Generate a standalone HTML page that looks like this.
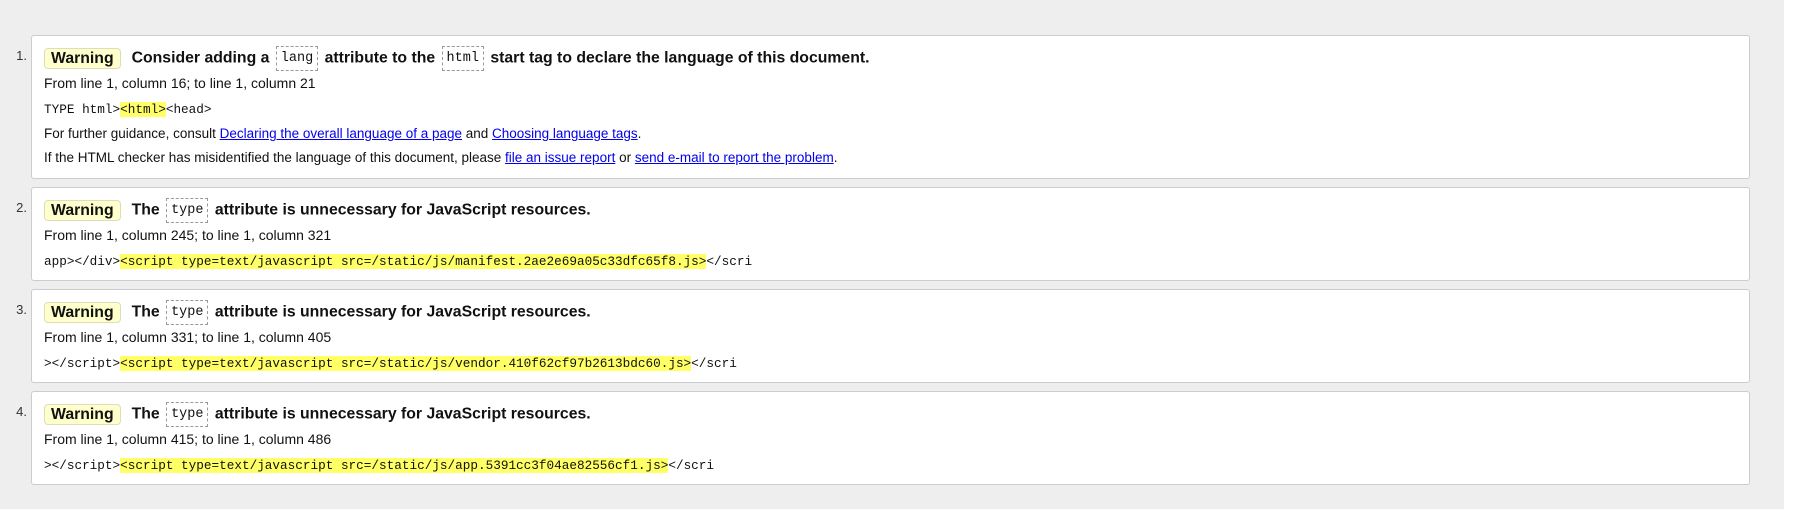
<!DOCTYPE html>
<html><head><meta charset="utf-8"><style>
*{margin:0;padding:0;box-sizing:border-box}
body{width:1796px;height:510px;background:#fff;font-family:"Liberation Sans",Arial,sans-serif;color:#111;position:relative;overflow:hidden}
#bg{position:absolute;left:0;top:0;width:1784px;height:509px;background:#eee}
.box{position:absolute;left:31px;width:1719px;background:#fff;border:1px solid #ccc;border-radius:3px}
.l{position:absolute;left:44px;height:20px;line-height:20px;white-space:nowrap;font-size:14px}
.t{font-size:15.8px;font-weight:bold}
.num{position:absolute;left:0;width:27px;text-align:right;font-size:13px;color:#333;line-height:20px;height:20px}
.badge{display:inline-block;background:#ffc;border:1px solid #ddb;border-radius:4px;padding:0 6px;height:21px;line-height:19px;margin-right:11px;vertical-align:middle}
code{font-family:"Liberation Mono",monospace;font-size:12.7px;font-weight:normal}
.cb{display:inline-block;border:1px dashed #999;padding:0 4px;height:25px;line-height:23px;vertical-align:middle;font-size:13.5px;margin:0 2px}
.hl{background:#ff6}
a{color:#00e;text-decoration:underline}
</style></head><body>
<div id="bg"></div>
<div class="box" style="top:35px;height:144px"></div>
<div class="box" style="top:187px;height:94px"></div>
<div class="box" style="top:289px;height:94px"></div>
<div class="box" style="top:391px;height:94px"></div>

<div class="num" style="top:46px">1.</div>
<div class="l t" style="top:46px"><span class="badge">Warning</span>Consider adding a <code class="cb">lang</code> attribute to the <code class="cb">html</code> start tag to declare the language of this document.</div>
<div class="l" style="top:73px">From line 1, column 16; to line 1, column 21</div>
<div class="l" style="top:98px"><code>TYPE html&gt;<span class="hl">&lt;html&gt;</span>&lt;head&gt;</code></div>
<div class="l" style="top:124px;font-size:13.5px">For further guidance, consult <a>Declaring the overall language of a page</a> and <a>Choosing language tags</a>.</div>
<div class="l" style="top:148px;font-size:13.5px">If the HTML checker has misidentified the language of this document, please <a>file an issue report</a> or <a>send e-mail to report the problem</a>.</div>

<div class="num" style="top:198px">2.</div>
<div class="l t" style="top:198px"><span class="badge">Warning</span>The <code class="cb">type</code> attribute is unnecessary for JavaScript resources.</div>
<div class="l" style="top:225px">From line 1, column 245; to line 1, column 321</div>
<div class="l" style="top:250px"><code>app&gt;&lt;/div&gt;<span class="hl">&lt;script type=text/javascript src=/static/js/manifest.2ae2e69a05c33dfc65f8.js&gt;</span>&lt;/scri</code></div>

<div class="num" style="top:300px">3.</div>
<div class="l t" style="top:300px"><span class="badge">Warning</span>The <code class="cb">type</code> attribute is unnecessary for JavaScript resources.</div>
<div class="l" style="top:327px">From line 1, column 331; to line 1, column 405</div>
<div class="l" style="top:352px"><code>&gt;&lt;/script&gt;<span class="hl">&lt;script type=text/javascript src=/static/js/vendor.410f62cf97b2613bdc60.js&gt;</span>&lt;/scri</code></div>

<div class="num" style="top:402px">4.</div>
<div class="l t" style="top:402px"><span class="badge">Warning</span>The <code class="cb">type</code> attribute is unnecessary for JavaScript resources.</div>
<div class="l" style="top:429px">From line 1, column 415; to line 1, column 486</div>
<div class="l" style="top:454px"><code>&gt;&lt;/script&gt;<span class="hl">&lt;script type=text/javascript src=/static/js/app.5391cc3f04ae82556cf1.js&gt;</span>&lt;/scri</code></div>
</body></html>
